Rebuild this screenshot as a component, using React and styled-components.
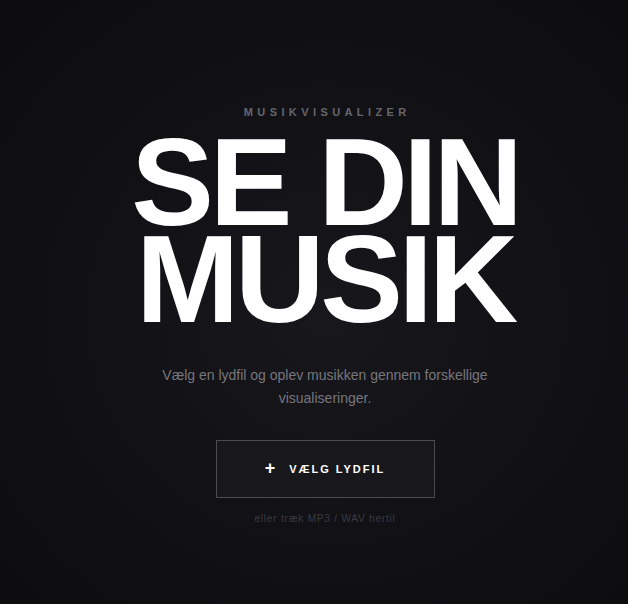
import React from 'react'
import styled, { createGlobalStyle } from 'styled-components'

const GlobalStyle = createGlobalStyle`
    * {
        box-sizing: border-box;
    }
    html, body {
        margin: 0;
        padding: 0;
        height: 100%;
        background: #0d0d0f;
    }
    body {
        font-family: "Liberation Sans", Arial, sans-serif;
        overflow: hidden;
    }
`

const Page = styled.main`
    min-height: 100vh;
    display: flex;
    flex-direction: column;
    align-items: center;
    padding: 107px 0 0 22px;
    background: radial-gradient(ellipse at 52% 52%, #18171c 0%, #121216 45%, #0c0c0e 100%);
    text-align: center;
`

const Eyebrow = styled.div`
    font-size: 11px;
    line-height: 1;
    font-weight: 700;
    letter-spacing: 0.4em;
    margin-right: -0.4em;
    color: #65656c;
    text-transform: uppercase;
`

const Title = styled.h1`
    margin: 16px 0 0;
    font-size: 124px;
    line-height: 0.78;
    font-weight: 700;
    letter-spacing: -0.035em;
    color: #ffffff;
`

const Lead = styled.p`
    margin: 37px 0 0;
    max-width: 340px;
    font-size: 14px;
    line-height: 23px;
    color: #77767d;
`

const PickButton = styled.button`
    margin-top: 30px;
    width: 219px;
    height: 58px;
    display: flex;
    align-items: center;
    justify-content: center;
    gap: 14px;
    background: #18181c;
    border: 1px solid #4b4b52;
    color: #ffffff;
    font-family: inherit;
    cursor: pointer;
`

const Plus = styled.span`
    font-size: 18px;
    font-weight: 700;
    line-height: 1;
    margin-top: -2px;
`

const Label = styled.span`
    font-size: 11px;
    font-weight: 700;
    letter-spacing: 0.18em;
`

const Hint = styled.div`
    margin-top: 15px;
    font-size: 10px;
    line-height: 12px;
    letter-spacing: 0.08em;
    color: #3a3a41;
`

export default function App() {
    return (
        <>
            <GlobalStyle />
            <Page>
                <Eyebrow>Musikvisualizer</Eyebrow>
                <Title>SE DIN<br />MUSIK</Title>
                <Lead>Vælg en lydfil og oplev musikken gennem forskellige visualiseringer.</Lead>
                <PickButton>
                    <Plus>+</Plus>
                    <Label>VÆLG LYDFIL</Label>
                </PickButton>
                <Hint>eller træk MP3 / WAV hertil</Hint>
            </Page>
        </>
    )
}
